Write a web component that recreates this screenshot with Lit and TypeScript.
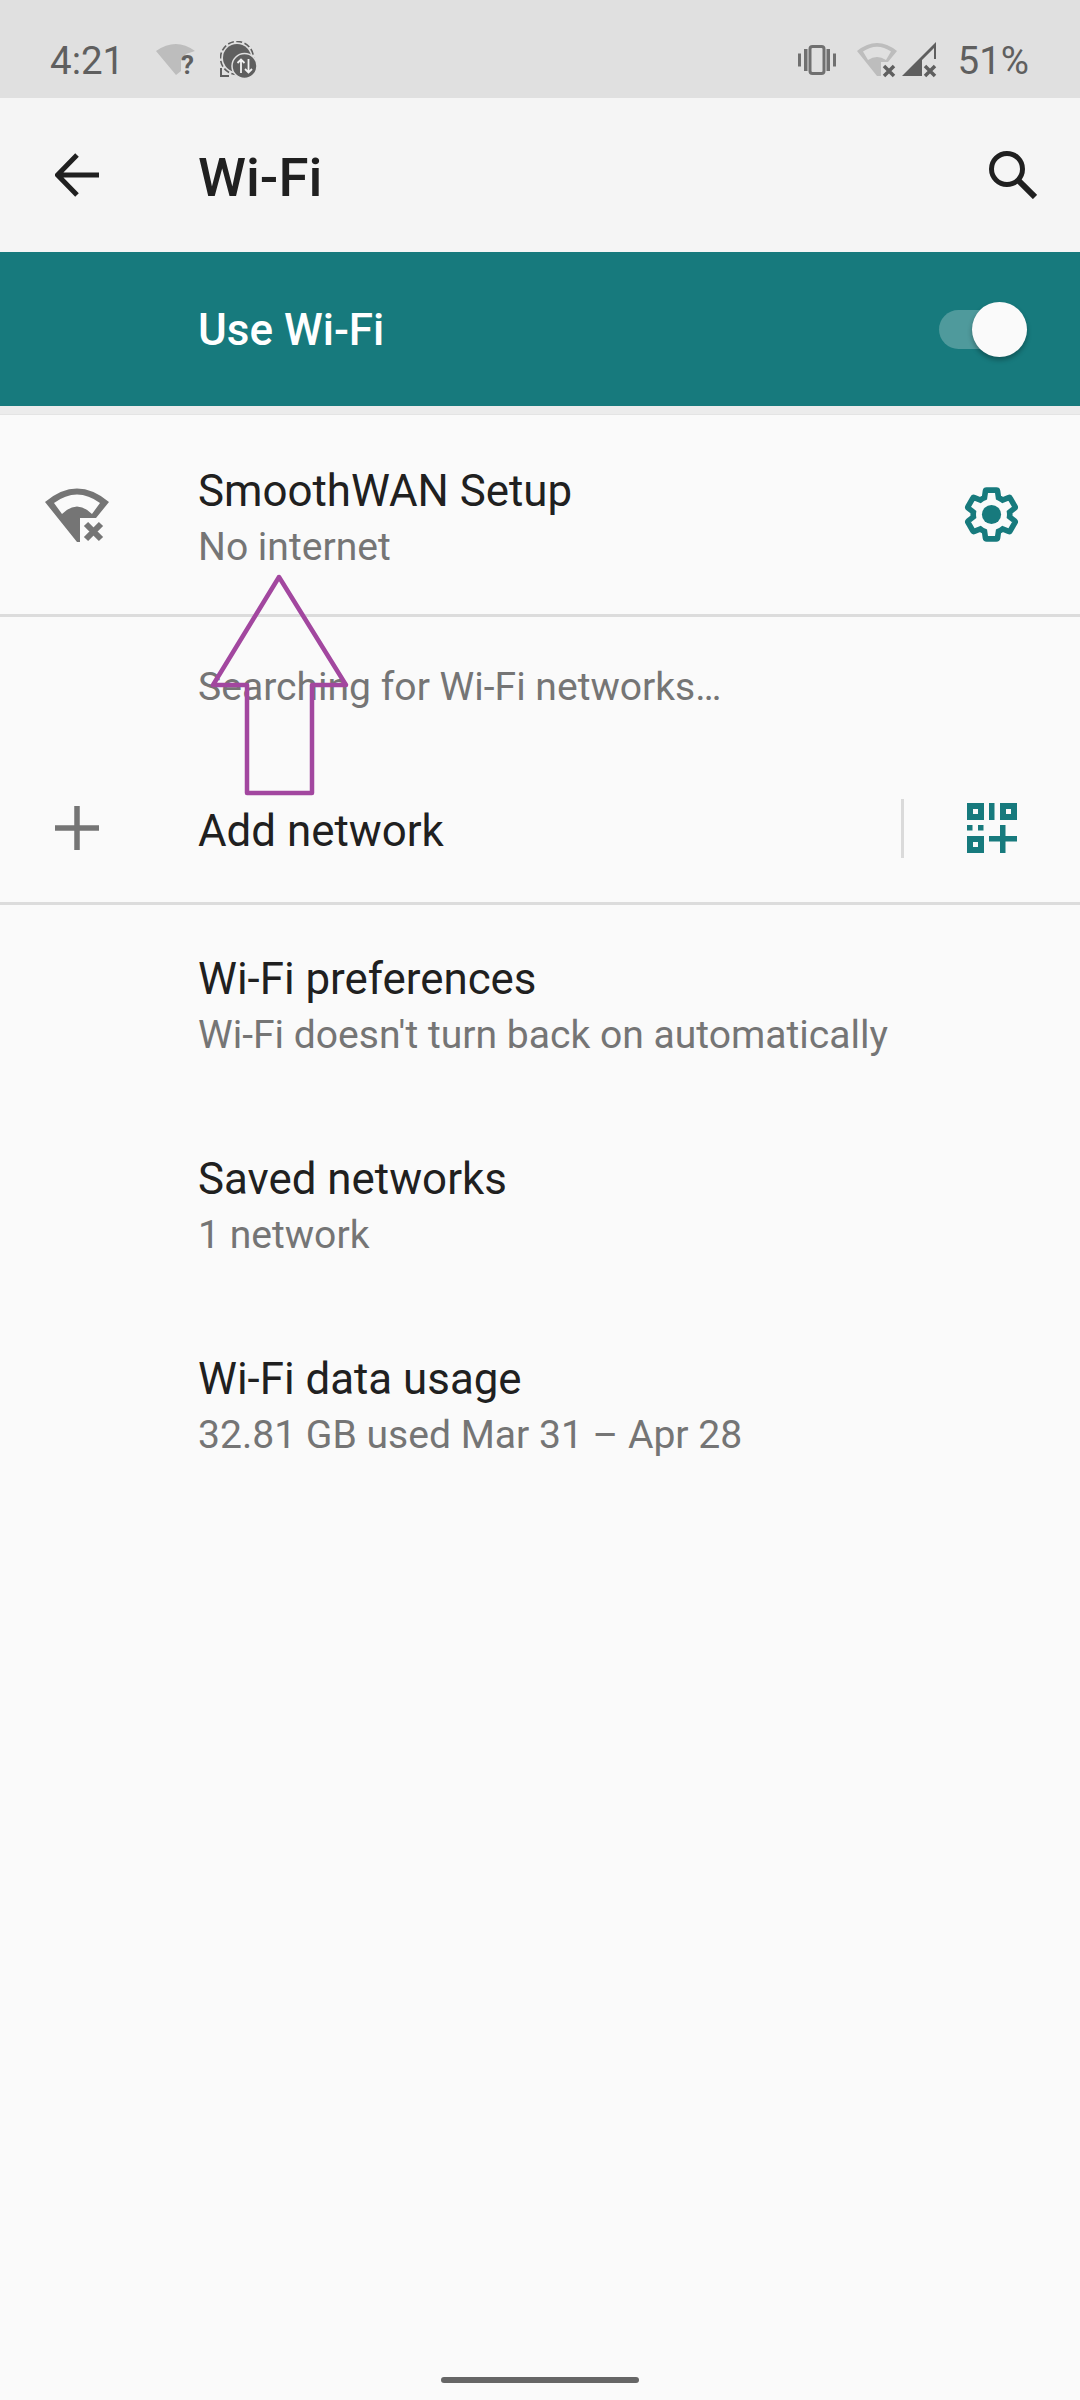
import { LitElement, html, css, svg } from 'lit';
import { customElement } from 'lit/decorators.js';

const gearPath =
  'M19.43 12.98c.04-.32.07-.64.07-.98s-.03-.66-.07-.98l2.11-1.65c.19-.15.24-.42.12-.64l-2-3.46c-.12-.22-.39-.3-.61-.22l-2.49 1c-.52-.4-1.08-.73-1.69-.98l-.38-2.65C14.46 2.18 14.25 2 14 2h-4c-.25 0-.46.18-.49.42l-.38 2.65c-.61.25-1.17.59-1.69.98l-2.49-1c-.23-.09-.49 0-.61.22l-2 3.46c-.13.22-.07.49.12.64l2.11 1.65c-.04.32-.07.65-.07.98s.03.66.07.98l-2.11 1.65c-.19.15-.24.42-.12.64l2 3.46c.12.22.39.3.61.22l2.49-1c.52.4 1.08.73 1.69.98l.38 2.65c.03.24.24.42.49.42h4c.25 0 .46-.18.49-.42l.38-2.65c.61-.25 1.17-.59 1.69-.98l2.49 1c.23.09.49 0 .61-.22l2-3.46c.12-.22.07-.49-.12-.64l-2.11-1.65z';

@customElement('app-root')
export class AppRoot extends LitElement {
  static styles = css`
    :host {
      display: block;
      position: relative;
      width: 1080px;
      height: 2400px;
      overflow: hidden;
      background: #fafafa;
      font-family: Roboto, 'Liberation Sans', sans-serif;
      color: #202020;
    }

    svg {
      display: block;
      flex: none;
    }

    .page {
      display: flex;
      flex-direction: column;
      height: 2400px;
    }

    .status {
      display: flex;
      align-items: center;
      height: 98px;
      padding: 22px 51px 0 50px;
      box-sizing: border-box;
      background: #e0e0e0;
      color: #5f5f5f;
      font-size: 38.5px;
    }

    .status-left {
      display: flex;
      align-items: center;
      gap: 24px;
      flex: 1;
    }

    .time {
      margin-right: 8px;
    }

    .status-right {
      display: flex;
      align-items: center;
    }

    .battery {
      margin-left: 21px;
    }

    .toolbar {
      display: flex;
      align-items: center;
      height: 154px;
      padding: 0 43px 0 55px;
      background: #f5f5f5;
    }

    .toolbar h1 {
      flex: 1;
      margin: 4px 0 0 99px;
      font-size: 54.5px;
      font-weight: 500;
    }

    .master {
      display: flex;
      align-items: center;
      justify-content: space-between;
      height: 154px;
      padding: 0 53px 0 198px;
      background: #177a7d;
      color: #fff;
      font-size: 44px;
      font-weight: 500;
    }

    .master span {
      margin-top: 2px;
    }

    .toggle {
      display: flex;
      align-items: center;
      justify-content: flex-end;
      width: 88px;
      height: 39px;
      border-radius: 20px;
      background: #4f9a9c;
    }

    .thumb {
      width: 55px;
      height: 55px;
      border-radius: 50%;
      background: #fafafa;
      box-shadow: 0 3px 5px rgba(0, 0, 0, 0.3);
    }

    .band {
      height: 9px;
      background: #ececec;
      border-bottom: 1px solid #e4e4e4;
      box-sizing: border-box;
    }

    .row {
      display: flex;
      align-items: center;
      box-sizing: border-box;
    }

    .connected {
      height: 202px;
      padding: 0 60px 0 44px;
      border-bottom: 3px solid #dcdcdc;
    }

    .connected .body {
      margin: 9px 0 0 88px;
      flex: 1;
    }

    .title {
      font-size: 43.85px;
      line-height: 56px;
    }

    .sub {
      font-size: 39.1px;
      line-height: 56px;
      color: #757575;
    }

    .searching {
      height: 141px;
      padding: 0 0 2px 198px;
    }

    .add {
      height: 147px;
      padding: 0 63px 4px 55px;
      border-bottom: 3px solid #dcdcdc;
    }

    .add .title {
      margin: 5px 0 0 99px;
      flex: 1;
    }

    .vline {
      width: 3px;
      height: 59px;
      margin-right: 63px;
      background: #dadada;
    }

    .pref {
      height: 200px;
      padding: 3px 0 0 198px;
    }

    .spacer {
      flex: 1;
    }

    .home {
      align-self: center;
      width: 198px;
      height: 6px;
      margin-bottom: 17px;
      border-radius: 3px;
      background: #666;
    }

    .arrow {
      position: absolute;
      left: 208px;
      top: 570px;
    }
  `;

  private wifiHelp() {
    return html`<svg width="40" height="44" viewBox="0 -5 40 44">
      <path d="M20 32 L0 8 Q20 -6 39 8 L30 11 L25 17 V28 Z" fill="#bdbdbd" />
      <text x="25" y="31" font-family="Roboto" font-size="26" font-weight="700" fill="#5f5f5f">?</text>
    </svg>`;
  }

  private dataSaver() {
    return html`<svg width="38" height="38" viewBox="0 0 38 38">
      <circle cx="17" cy="17" r="16.500" fill="none" stroke="#5f5f5f" stroke-width="1.600" stroke-dasharray="6 2.500" />
      <circle cx="17" cy="17" r="14" fill="#5f5f5f" />
      <path d="M1 27 V35 H9" fill="none" stroke="#5f5f5f" stroke-width="2" />
      <circle cx="24.500" cy="25" r="12.500" fill="#5f5f5f" stroke="#e0e0e0" stroke-width="1.500" />
      <path d="M21 32 V18.500 M17.500 22 L21 18.500 L24.500 22 M28.500 18 V31.500 M25 28 L28.500 31.500 L32 28" fill="none" stroke="#f2f2f2" stroke-width="1.800" />
    </svg>`;
  }

  private vibrate() {
    return html`<svg width="40" height="30" viewBox="0 0 40 30">
      <path d="M1 8.500 H4 V21.500 H1 Z M36 8.500 H39 V21.500 H36 Z M7 4 H10.500 V26 H7 Z M29.500 4 H33 V26 H29.500 Z" fill="#707070" />
      <rect x="13" y="1.500" width="14" height="27" rx="2.500" fill="none" stroke="#707070" stroke-width="3" />
    </svg>`;
  }

  private wifiOff() {
    return html`<svg width="41" height="36" viewBox="0 0 41 36" style="margin-left:20px">
      <path fill-rule="evenodd" d="M20 34 L0 9 Q20 -7 40 9 L31 20 H24 V34 Z M6 9.500 Q20 0 34 9.500 L29 18 Q20 12 11 18 Z" fill="#bdbdbd" />
      <path d="M27 24 L37 34 M37 24 L27 34" stroke="#5f5f5f" stroke-width="3.500" />
    </svg>`;
  }

  private signal() {
    return html`<svg width="35" height="36" viewBox="0 0 35 36" style="margin-left:4px">
      <path d="M0 34 L34 0 V17 H32 V6 L20 18 V34 Z" fill="#5f5f5f" />
      <path d="M23 24 L33 34 M33 24 L23 34" stroke="#5f5f5f" stroke-width="3.500" />
    </svg>`;
  }

  private back() {
    return html`<svg width="44" height="44" viewBox="0 0 44 44">
      <path d="M44 22 H4 M22 2 L2.500 22 L22 42" fill="none" stroke="#202020" stroke-width="5" />
    </svg>`;
  }

  private search() {
    return html`<svg width="48" height="48" viewBox="0 0 48 48">
      <circle cx="18" cy="18" r="15.500" fill="none" stroke="#202020" stroke-width="5" />
      <path d="M29 29 L46 46" stroke="#202020" stroke-width="6" />
    </svg>`;
  }

  private wifiRow() {
    return html`<svg width="66" height="56" viewBox="0 0 66 56">
      <path fill-rule="evenodd" d="M33 55 L1 15 Q33 -12 65 15 L52 31 H36 V55 Z M10 16 Q33 -1 56 16 L48 27 Q33 12 18 27 Z" fill="#757575" />
      <path d="M42 37 L57 52 M57 37 L42 52" stroke="#757575" stroke-width="6" />
    </svg>`;
  }

  private gear() {
    return html`<svg width="57" height="57" viewBox="1 1 22 22">
      <path d="${gearPath}" transform="translate(12 12) scale(0.94) translate(-12 -12)" fill="none" stroke="#177a7d" stroke-width="2.300" />
      <circle cx="12" cy="12" r="3.700" fill="#177a7d" />
    </svg>`;
  }

  private plus() {
    return html`<svg width="44" height="44" viewBox="0 0 44 44">
      <path d="M0 22 H44 M22 0 V44" stroke="#757575" stroke-width="5.500" />
    </svg>`;
  }

  private qr() {
    const box = (x: number, y: number) =>
      svg`<rect x="${x + 3}" y="${y + 3}" width="11" height="11" fill="none" stroke="#177a7d" stroke-width="6" />`;
    return html`<svg width="50" height="50" viewBox="0 0 50 50">
      ${box(0, 0)} ${box(33, 0)} ${box(0, 33)}
      <path d="M22 0 H27.500 V17 H22 Z M0 22 H5.500 V27.500 H0 Z M11 22 H16.500 V27.500 H11 Z M33 22 H38.500 V33 H50 V38.500 H38.500 V50 H33 V38.500 H22 V33 H33 Z" fill="#177a7d" />
    </svg>`;
  }

  render() {
    return html`
      <div class="page">
        <div class="status">
          <div class="status-left">
            <span class="time">4:21</span>
            ${this.wifiHelp()} ${this.dataSaver()}
          </div>
          <div class="status-right">
            ${this.vibrate()} ${this.wifiOff()} ${this.signal()}
            <span class="battery">51%</span>
          </div>
        </div>

        <div class="toolbar">
          ${this.back()}
          <h1>Wi-Fi</h1>
          ${this.search()}
        </div>

        <div class="master">
          <span>Use Wi-Fi</span>
          <div class="toggle"><div class="thumb"></div></div>
        </div>
        <div class="band"></div>

        <div class="row connected">
          ${this.wifiRow()}
          <div class="body">
            <div class="title">SmoothWAN Setup</div>
            <div class="sub">No internet</div>
          </div>
          ${this.gear()}
        </div>

        <div class="row searching"><div class="sub">Searching for Wi-Fi networks…</div></div>

        <div class="row add">
          ${this.plus()}
          <div class="title">Add network</div>
          <div class="vline"></div>
          ${this.qr()}
        </div>

        <div class="row pref">
          <div>
            <div class="title">Wi-Fi preferences</div>
            <div class="sub">Wi-Fi doesn't turn back on automatically</div>
          </div>
        </div>
        <div class="row pref">
          <div>
            <div class="title">Saved networks</div>
            <div class="sub">1 network</div>
          </div>
        </div>
        <div class="row pref">
          <div>
            <div class="title">Wi-Fi data usage</div>
            <div class="sub">32.81 GB used Mar 31 – Apr 28</div>
          </div>
        </div>

        <div class="spacer"></div>
        <div class="home"></div>
      </div>

      <svg class="arrow" width="144" height="230" viewBox="208 570 144 230">
        <path d="M279 577 L213 685 H247 V793 H312 V685 H346 Z" fill="none" stroke="#a2479f" stroke-width="4.500" stroke-linejoin="round" />
      </svg>
    `;
  }
}
